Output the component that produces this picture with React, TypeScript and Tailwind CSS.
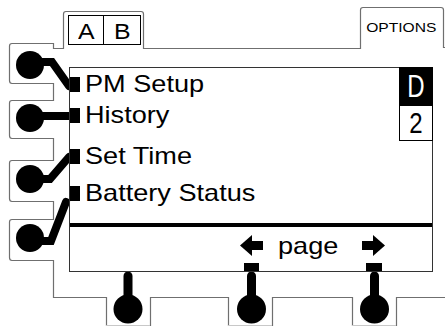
import React from "react";

const LINE = "#6f6f6f";

// front panel outline, knobs and their stems
function Panel() {
  const knobs = [
    { cx: 30, cy: 65, pts: "30,62 52,62 69,86" },
    { cx: 30, cy: 118, pts: "30,116 71,116" },
    { cx: 30, cy: 179, pts: "30,179 50,179 69,157" },
    { cx: 30, cy: 238, pts: "30,241 51,241 66,202" },
  ];
  const bottom = [128, 251.5, 374.5];
  return (
    <svg className="absolute inset-0" width="445" height="326" viewBox="0 0 445 326">
      <path
        d="M445 47.5 L443.5 47.5 L443.5 10 Q443.5 7.5 441 7.5 L363 7.5 Q360.5 7.5 360.5 10 L360.5 48.5 L143.5 48.5 L143.5 14 Q143.5 11.5 141 11.5 L66 11.5 Q63.5 11.5 63.5 14 L63.5 48.5 L53.5 48.5 L53.5 43.5 L12 43.5 Q9.5 43.5 9.5 46 L9.5 80.5 Q9.5 83.5 12 83.5 L53.5 83.5 L53.5 100.5 L12 100.5 Q9.5 100.5 9.5 103 L9.5 135.5 Q9.5 138.5 12 138.5 L53.5 138.5 L53.5 160.5 L12 160.5 Q9.5 160.5 9.5 163 L9.5 198.5 Q9.5 201.5 12 201.5 L53.5 201.5 L53.5 219.5 L12 219.5 Q9.5 219.5 9.5 222 L9.5 257.5 Q9.5 260.5 12 260.5 L53.5 260.5 L53.5 297.5 L106.5 297.5 L106.5 326 M150.5 326 L150.5 297.5 L228.5 297.5 L228.5 326 M272.5 326 L272.5 297.5 L352.5 297.5 L352.5 326 M396.5 326 L396.5 297.5 L445 297.5"
        fill="none"
        stroke={LINE}
        strokeWidth="1.2"
      />
      <path d="M106 325.5 H150 M228 325.5 H272 M352 325.5 H396" stroke="#c8c8c8" strokeWidth="1" />
      {knobs.map((k, i) => (
        <g key={i}>
          <polyline points={k.pts} fill="none" stroke="#000" strokeWidth="8" strokeLinecap="round" strokeLinejoin="miter" />
          <circle cx={k.cx} cy={k.cy} r="14" fill="#000" />
        </g>
      ))}
      {bottom.map((x, i) => (
        <g key={i}>
          <line x1={x} y1={276} x2={x} y2={305} stroke="#000" strokeWidth="9" strokeLinecap="round" />
          <circle cx={x} cy={309} r="14.5" fill="#000" />
        </g>
      ))}
    </svg>
  );
}

function Arrow({ right }: { right?: boolean }) {
  return (
    <svg width="23" height="21" viewBox="0 0 23 21" className={right ? "-scale-x-100" : ""}>
      <polygon points="0,10.5 12,0 12,21" fill="#000" />
      <rect x="11" y="6" width="12" height="9" fill="#000" />
    </svg>
  );
}

const items = [
  { label: "PM Setup", mt: "mt-[4px]" },
  { label: "History", mt: "mt-[7px]" },
  { label: "Set Time", mt: "mt-[17px]" },
  { label: "Battery Status", mt: "mt-[13px]" },
];

export default function App() {
  return (
    <div className="relative w-[445px] h-[326px] overflow-hidden bg-white text-black font-[family-name:Liberation_Sans,Arial,sans-serif]">
      <Panel />

      <div className="relative flex flex-col">
        {/* tab row */}
        <div className="flex h-[67px] items-start">
          <div className="ml-[68px] mt-[15px] flex h-[30px] w-[73px] border border-black text-[22px] leading-none">
            <div className="flex w-[35px] items-center justify-center border-r border-black pt-[3px]">
              <span className="scale-x-[1.13]">A</span>
            </div>
            <div className="flex flex-1 items-center justify-center pt-[3px]">
              <span className="scale-x-[1.13]">B</span>
            </div>
          </div>
          <div className="ml-auto mr-[2px] mt-[21px] flex w-[83px] justify-center text-[13px] leading-none">
            <span className="scale-x-[1.2]">OPTIONS</span>
          </div>
        </div>

        {/* screen */}
        <div className="ml-[69px] flex h-[205px] w-[364px] flex-col border border-[#333]">
          <div className="flex h-[155px]">
            <div className="flex flex-1 flex-col">
              {items.map((it) => (
                <div key={it.label} className={`flex h-[24px] items-start ${it.mt}`}>
                  <div className="mt-[5px] h-[15px] w-[10px] bg-black" />
                  <div className="ml-[5px] origin-left scale-x-[1.13] text-[24px] leading-[24px]">{it.label}</div>
                </div>
              ))}
            </div>
            <div className="-mr-px -mt-px flex w-[34px] flex-col">
              <div className="flex h-[39px] items-center justify-center bg-black text-[24px] leading-none text-white">
                <span className="scale-y-[1.28]">D</span>
              </div>
              <div className="flex h-[35px] items-center justify-center border border-t-0 border-black text-[24px] leading-none">
                <span className="scale-y-[1.2]">2</span>
              </div>
            </div>
          </div>
          <div className="h-[4px] bg-black" />
          <div className="flex h-[44px] flex-col">
            <div className="mt-[8px] flex h-[21px] items-center pl-[170px]">
              <Arrow />
              <div className="ml-[15px] origin-left scale-x-[1.13] text-[24px] leading-none">page</div>
              <div className="ml-[31px]">
                <Arrow right />
              </div>
            </div>
            <div className="mt-auto flex pl-[174px]">
              <div className="h-[8px] w-[15px] bg-black" />
              <div className="ml-[107px] h-[8px] w-[16px] bg-black" />
            </div>
          </div>
        </div>
      </div>
    </div>
  );
}
